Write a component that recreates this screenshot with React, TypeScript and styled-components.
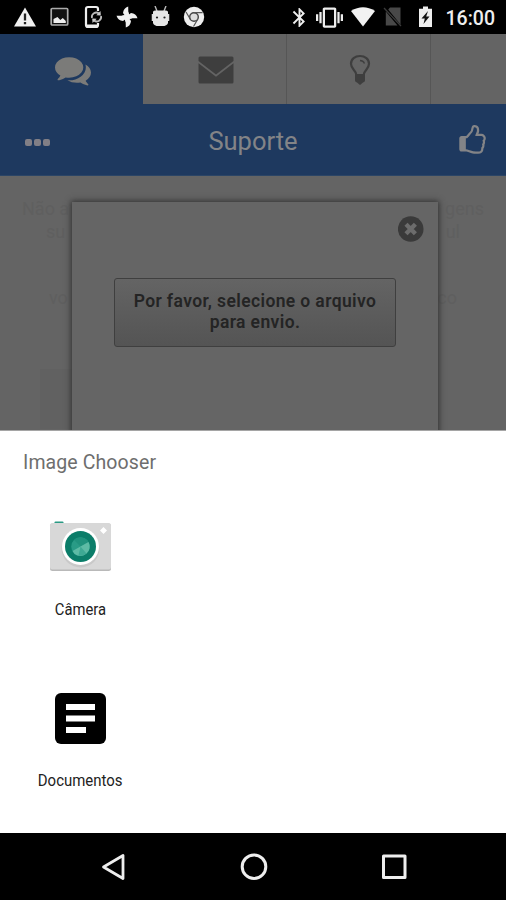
import React from "react";
import styled, { createGlobalStyle } from "styled-components";
import { MdBluetooth, MdVibration } from "react-icons/md";

const GlobalStyle = createGlobalStyle`
  * { box-sizing: border-box; }
  body { margin: 0; background: #000; font-family: Roboto, "Liberation Sans", sans-serif; }
  svg { display: block; flex: none; }
`;

const Screen = styled.div`
  width: 506px;
  height: 900px;
  display: flex;
  flex-direction: column;
  overflow: hidden;
`;

const StatusBar = styled.header`
  height: 34px;
  flex: none;
  background: #000;
  color: #eee;
  display: flex;
  justify-content: space-between;
  align-items: center;
  padding: 0 11px 0 13px;
`;

const StatusGroup = styled.div<{ $gap: number }>`
  display: flex;
  align-items: center;
  gap: ${(p) => p.$gap}px;
`;

const Clock = styled.span`
  font-size: 19.5px;
  font-weight: 500;
  line-height: 34px;
  margin-left: 3px;
  padding-top: 3px;
`;

const Backdrop = styled.main`
  position: relative;
  height: 396px;
  flex: none;
  overflow: hidden;
  background: #646464;
`;

const Tabs = styled.nav`
  height: 70px;
  display: grid;
  grid-template-columns: 143px 144px 144px 75px;
`;

const Tab = styled.div<{ $active?: boolean }>`
  display: flex;
  align-items: center;
  justify-content: center;
  padding: 1px 0 0 2px;
  background: ${(p) => (p.$active ? "#1e395f" : "#646464")};
  color: ${(p) => (p.$active ? "#7b7b79" : "#3e3e3e")};
  border-right: ${(p) => (p.$active ? "0" : "1px solid #565656")};
  &:last-child { border-right: 0; }
`;

const TitleBar = styled.div`
  height: 72px;
  display: grid;
  grid-template-columns: 60px 1fr 60px;
  align-items: center;
  padding: 1px 18px 0 18px;
  background: #1e395f;
  color: #838487;
  border-bottom: 1px solid #2b4566;
`;

const Title = styled.h1`
  margin: 0;
  padding-top: 2px;
  font-size: 25.5px;
  font-weight: 400;
  line-height: 68px;
  text-align: center;
`;

const Dots = styled.div`
  display: flex;
  gap: 2.5px;
  padding: 4px 0 0 7px;
`;

const Dot = styled.i`
  width: 6.5px;
  height: 7px;
  border-radius: 2px;
  background: #817f86;
`;

const ThumbSlot = styled.div`
  display: flex;
  justify-content: flex-end;
`;

const Notice = styled.div`
  padding: 21px 22px;
  color: #5f5f5f;
  font-size: 18px;
  line-height: 23px;
`;

const NoticeLine = styled.div<{ $inset: number; $gap?: number }>`
  display: flex;
  justify-content: space-between;
  padding: 0 ${(p) => p.$inset}px;
  margin-top: ${(p) => p.$gap ?? 0}px;
`;

const FadedButton = styled.div`
  width: 240px;
  height: 60px;
  margin: 60px 0 0 18px;
  background: #616161;
`;

const Dialog = styled.section`
  position: absolute;
  left: 72px;
  top: 168px;
  width: 366px;
  height: 300px;
  background: #656565;
  box-shadow: 0 0 6px 1px #303030;
  display: flex;
  flex-direction: column;
  padding: 14px 14px 0;
`;

const CloseButton = styled.button`
  align-self: flex-end;
  width: 26px;
  height: 26px;
  padding: 0;
  border: 0;
  background: none;
`;

const FileButton = styled.button`
  width: 282px;
  height: 69px;
  margin: 36px 0 0 28px;
  border: 1px solid #3f3f3f;
  border-radius: 3px;
  background: linear-gradient(#646464, #545454);
  color: #242424;
  font: 600 17.5px/21px Roboto, sans-serif;
  letter-spacing: 0.38px;
  white-space: nowrap;
  padding: 0 10px 1px;
`;

const Sheet = styled.section`
  height: 403px;
  flex: none;
  background: #fff;
  border-top: 1px solid #a5a5a5;
`;

const SheetTitle = styled.h2`
  margin: 0;
  padding: 20px 23px 0;
  font-size: 19.5px;
  font-weight: 400;
  line-height: 24px;
  letter-spacing: 0.1px;
  color: #6e6e6e;
`;

const AppList = styled.div`
  display: flex;
  flex-direction: column;
  width: 160px;
  padding-top: 35px;
`;

const AppItem = styled.div`
  height: 171px;
  display: flex;
  flex-direction: column;
  align-items: center;
  padding-top: 4px;
`;

const AppLabel = styled.span<{ $squeeze: number }>`
  margin-top: 16px;
  font-size: 17px;
  line-height: 22px;
  color: #222;
  white-space: nowrap;
  transform: scaleX(${(p) => p.$squeeze});
`;

const NavBar = styled.footer`
  height: 67px;
  flex: none;
  background: #000;
  display: flex;
  justify-content: space-between;
  align-items: center;
  padding: 0 97px 0 98px;
`;

const WarningIcon = () => (
  <svg width="24" height="22" viewBox="0 0 24 22">
    <path d="M12 1.5 23 20.5H1Z" fill="#f0f0f0" />
    <path d="M12 7.5v7M12 16v2.3" stroke="#222" strokeWidth="2.3" />
  </svg>
);

const PictureIcon = () => (
  <svg width="19" height="20" viewBox="0 0 19 20">
    <rect x="1.2" y="1.5" width="16.5" height="16.5" rx="1" fill="#111" stroke="#aaa" strokeWidth="1.7" />
    <path d="M3.5 16v-4l4-2 2.8 3 2.5-2 3 3v2z" fill="#eee" />
  </svg>
);

const PhoneSyncIcon = () => (
  <svg width="20" height="24" viewBox="0 0 20 24">
    <path d="M15 6V4q0-2-2-2H5Q3 2 3 4v16q0 2 2 2h8q2 0 2-2v-2" fill="none" stroke="#eee" strokeWidth="2.2" />
    <path d="M3 19.5h12V21q0 1.5-2 1.5H5q-2 0-2-1.5z" fill="#eee" />
    <path d="M9 13a4.4 4.4 0 0 1 7-4.5M18 11a4.4 4.4 0 0 1-7 4.5" fill="none" stroke="#bbb" strokeWidth="1.8" />
    <path d="m17.5 6 .3 4.5-4.5-.3zM9.5 18l-.3-4.5 4.5.3z" fill="#ccc" />
  </svg>
);

const PinwheelIcon = () => (
  <svg width="22" height="22" viewBox="0 0 22 22" fill="#f0f0f0">
    {[0, 90, 180, 270].map((angle) => (
      <path key={angle} transform={`rotate(${angle} 11 11)`} d="M10.500 12 7 7Q7.500 2 12.200.500L12.300 5.500Q14 8.500 11.800 12Z" />
    ))}
  </svg>
);

const RobotIcon = () => (
  <svg width="19" height="22" viewBox="0 0 19 22">
    <path d="m4 0 2 5M15 0l-2 5" stroke="#bbb" strokeWidth="1.4" />
    <path d="M2 6q0-1.500 2-1.500h11q2 0 2 1.500v10.500q0 1.500-1.500 2.500L13.500 20h-8L3.500 19Q2 18 2 16.500Z" fill="#e6e6e6" />
    <path d="M1.500 8v7M17.500 8v7" stroke="#ddd" strokeWidth="1.500" />
    <circle cx="6" cy="11.500" r="1.100" fill="#222" />
    <circle cx="13.500" cy="11.500" r="1.100" fill="#222" />
  </svg>
);

const BrowserIcon = () => (
  <svg width="22" height="22" viewBox="0 0 22 22">
    <circle cx="11" cy="11" r="10.200" fill="#eee" />
    <circle cx="11" cy="11" r="4.300" fill="#ddd" stroke="#444" strokeWidth="1.400" />
    <path d="M11 6.700h8.600M7.300 13.200 3 6M14.700 13.200 10.500 20.500" stroke="#555" strokeWidth="1.200" />
  </svg>
);

const WifiIcon = () => (
  <svg width="26" height="22" viewBox="0 0 26 22">
    <path d="M1 5Q13-2.500 25 5L13 20.500Z" fill="#f2f2f2" />
  </svg>
);

const NoSimIcon = () => (
  <svg width="20" height="22" viewBox="0 0 20 22">
    <path d="M7 1.500h10.500V18.500L5.200 3.500ZM2.800 5.500v14h11.700Z" fill="#484848" />
    <path d="m1 2 17 18" stroke="#3a3a3a" strokeWidth="1.300" />
  </svg>
);

const BatteryIcon = () => (
  <svg width="15" height="22" viewBox="0 0 15 22">
    <path d="M5 .5h5v2.300h4V21H1V2.800h4z" fill="#eee" />
    <path d="M10 5 3.500 12.500h3.300L5.500 18l6-7.500H8.200z" fill="#111" />
  </svg>
);

const ChatIcon = () => (
  <svg width="36" height="36" viewBox="0 0 1792 1792" fill="currentColor">
    <path d="M1408 768q0 139-94 257t-256.500 186.500-353.500 68.500q-86 0-176-16-124 88-278 128-36 9-86 16h-3q-11 0-20.500-8t-11.500-21q-1-3-1-6.500t.5-6.500 2-6l2.500-5 3.500-5.500 4-5 4.500-5 4-4.500q5-6 23-25t26-29.500 22.500-29 25-38.500 20.500-44q-124-72-195-177t-71-224q0-139 94-257t256.500-186.500 353.500-68.500 353.500 68.500 256.500 186.500 94 257zm384 256q0 120-71 224.500t-195 176.500q10 24 20.500 44t25 38.500 22.500 29 26 29.500 23 25q1 1 4 4.500t4.500 5 4 5 3.500 5.500l2.500 5 2 6 .5 6.500-1 6.500q-3 14-13 22t-22 7q-50-7-86-16-154-40-278-128-90 16-176 16-271 0-472-132 58 4 88 4 161 0 309-45t264-129q125-92 192-212t67-254q0-77-23-152 129 71 204 178t75 230z" />
  </svg>
);

const MailIcon = () => (
  <svg width="36" height="28" viewBox="0 0 36 28" fill="currentColor">
    <path d="M2 .5h32q1.500 0 1.500 1.500v3L18 18.500 .5 5V2Q.5.500 2 .5Z" />
    <path d="M.5 7.200 18 20.700 35.500 7.200V26q0 1.500-1.500 1.500H2Q.5 27.500.5 26Z" />
  </svg>
);

const BulbIcon = () => (
  <svg width="22" height="32" viewBox="0 0 22 32">
    <path d="M7.200 20.500C6.800 16 2 15 2 9.800 2 5 6 2 11 2s9 3 9 7.800c0 5.200-4.800 6.200-5.200 10.700" fill="none" stroke="currentColor" strokeWidth="2.200" />
    <path d="M11 6.500q3.500.3 4.500 3" fill="none" stroke="currentColor" strokeWidth="1.300" />
    <path d="M6 20h10v6.500q0 1.700-2 2L11 31l-3-2.500q-2-.3-2-2Z" fill="currentColor" />
  </svg>
);

const ThumbIcon = () => (
  <svg width="31" height="31" viewBox="0 0 1792 1792" fill="currentColor">
    <path d="M1536 768q0-51-39-89.500t-89-38.500h-352q0-58 48-159.500t48-160.500q0-98-32-145t-128-47q-26 26-38 85t-30.500 125.500-59.500 109.500q-22 23-77 91-4 5-23 30t-31.500 41-34.500 42.500-40 44-38.500 35.500-40 27-35.500 9h-32v640h32q13 0 31.500 3t33 6.500 38 11 35 11.500 35.500 12.500 29 10.500q211 73 342 73h121q192 0 192-167 0-26-5-56 30-16 47.500-52.500t17.500-73.500-18-69q53-50 53-119 0-25-10-55.500t-25-47.500q32-1 53.500-47t21.500-81zm128-1q0 89-49 163 9 33 9 69 0 77-38 144 3 21 3 43 0 101-60 178 1 139-85 219.500t-227 80.500h-129q-96 0-188.500-22.500t-213.500-66.500q-116-40-138-40h-288q-53 0-90.500-37.500t-37.500-90.500v-640q0-53 37.500-90.500t90.500-37.500h274q36-24 137-155 58-75 107-128 24-25 35.500-85.500t30.500-126.500 62-108q39-37 90-37 84 0 151 32.500t102 101.500 35 186q0 93-48 192h176q104 0 180 76t76 179z" />
  </svg>
);

const CloseIcon = () => (
  <svg width="26" height="26" viewBox="0 0 26 26">
    <circle cx="12.700" cy="13" r="12.800" fill="#3a3a3a" />
    <path d="m8 8.300 9.400 9.400M17.400 8.300 8 17.700" stroke="#6c6c6c" strokeWidth="4.400" />
  </svg>
);

const CameraIcon = () => (
  <svg width="64" height="68" viewBox="0 0 64 68">
    <rect x="6.500" y="7.500" width="9" height="5" rx="1" fill="#2a9a84" />
    <rect x="2" y="9.500" width="61" height="47.500" rx="2.500" fill="#b9b9b9" />
    <rect x="2" y="9" width="61" height="46.500" rx="2.500" fill="#d8d8d8" />
    <circle cx="32.500" cy="34.500" r="19" fill="#c9c9c9" />
    <circle cx="32.500" cy="32.500" r="18.500" fill="#fff" />
    <circle cx="32.500" cy="32.500" r="15.500" fill="#0b7d69" />
    <circle cx="32.500" cy="32.500" r="9.300" fill="#299b86" />
    <path d="M32.500 32.500 26 26A9.300 9.300 0 0 1 40.500 28Z" fill="#20927d" />
    <path d="M24.500 37 40.500 28a9.300 9.300 0 0 1-2 11.600 9.300 9.300 0 0 1-12 .4Z" fill="#5dbba5" />
    <path d="m32.500 32.500 6 7a9.300 9.300 0 0 1-8 2Z" fill="#3ea994" />
    <path d="m55.500 13 3.500 3.500-3.500 3.500-3.500-3.500Z" fill="#fff" />
  </svg>
);

const DocumentIcon = () => (
  <svg width="64" height="68" viewBox="0 0 64 68">
    <rect x="7" y="8" width="51" height="51" rx="6" fill="#000" />
    <path d="M18 22h29M18 33.500h29M18 45h20" stroke="#fff" strokeWidth="6" />
  </svg>
);

const BackIcon = () => (
  <svg width="30" height="30" viewBox="0 0 30 30" fill="none" stroke="#eee" strokeWidth="2.800" strokeLinejoin="round">
    <path d="M25 3.500v23L5.500 15Z" />
  </svg>
);

const HomeIcon = () => (
  <svg width="30" height="30" viewBox="0 0 30 30" fill="none" stroke="#eee" strokeWidth="3">
    <circle cx="15" cy="14.700" r="11.800" />
  </svg>
);

const RecentIcon = () => (
  <svg width="30" height="30" viewBox="0 0 30 30" fill="none" stroke="#eee" strokeWidth="3" strokeLinejoin="round">
    <rect x="4.500" y="4" width="21.500" height="21.500" />
  </svg>
);

export default function App() {
  return (
    <Screen>
      <GlobalStyle />
      <StatusBar>
        <StatusGroup $gap={13.3}>
          <WarningIcon />
          <PictureIcon />
          <PhoneSyncIcon />
          <PinwheelIcon />
          <RobotIcon />
          <BrowserIcon />
        </StatusGroup>
        <StatusGroup $gap={15}>
          <StatusGroup $gap={7}>
            <StatusGroup $gap={5}>
              <MdBluetooth size={23} />
              <MdVibration size={27} />
            </StatusGroup>
            <StatusGroup $gap={7}>
              <WifiIcon />
              <NoSimIcon />
            </StatusGroup>
          </StatusGroup>
          <StatusGroup $gap={10}>
            <BatteryIcon />
            <Clock>16:00</Clock>
          </StatusGroup>
        </StatusGroup>
      </StatusBar>
      <Backdrop>
        <Tabs>
          <Tab $active><ChatIcon /></Tab>
          <Tab><MailIcon /></Tab>
          <Tab><BulbIcon /></Tab>
          <Tab />
        </Tabs>
        <TitleBar>
          <Dots><Dot /><Dot /><Dot /></Dots>
          <Title>Suporte</Title>
          <ThumbSlot><ThumbIcon /></ThumbSlot>
        </TitleBar>
        <Notice>
          <NoticeLine $inset={0}><span>Não a</span><span>gens</span></NoticeLine>
          <NoticeLine $inset={24}><span>su</span><span>ul</span></NoticeLine>
          <NoticeLine $inset={27} $gap={43}><span>vo</span><span>co</span></NoticeLine>
          <FadedButton />
        </Notice>
        <Dialog>
          <CloseButton aria-label="Fechar"><CloseIcon /></CloseButton>
          <FileButton>Por favor, selecione o arquivo<br />para envio.</FileButton>
        </Dialog>
      </Backdrop>
      <Sheet>
        <SheetTitle>Image Chooser</SheetTitle>
        <AppList>
          <AppItem><CameraIcon /><AppLabel $squeeze={0.87}>Câmera</AppLabel></AppItem>
          <AppItem><DocumentIcon /><AppLabel $squeeze={0.88}>Documentos</AppLabel></AppItem>
        </AppList>
      </Sheet>
      <NavBar>
        <BackIcon />
        <HomeIcon />
        <RecentIcon />
      </NavBar>
    </Screen>
  );
}
